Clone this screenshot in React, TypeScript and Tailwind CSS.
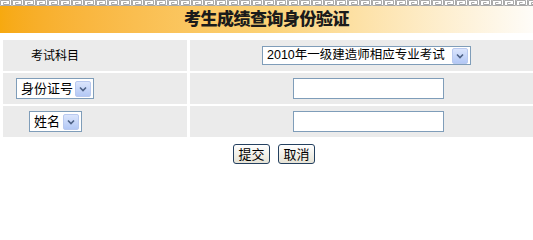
import React from 'react';

const cjk = '"Liberation Sans", "Noto Sans CJK SC", sans-serif';

function KeyStrip() {
  return (
    <svg width="533" height="6" className="block">
      <defs>
        <pattern id="key" width="12" height="6" patternUnits="userSpaceOnUse">
          <path
            d="M0.5 5.5 V0.5 H9.5 V4.5 H3.5 V2.5 H6.5 M11.5 0 V5.5 H0.5"
            fill="none"
            stroke="#a9a9a9"
            strokeWidth="1"
          />
        </pattern>
      </defs>
      <rect width="533" height="6" fill="#ffffff" />
      <rect width="533" height="6" fill="url(#key)" />
    </svg>
  );
}

function Arrow() {
  return (
    <span className="flex h-[16px] w-[16px] shrink-0 items-center justify-center rounded-[2px] border border-[#b9c9ef] bg-gradient-to-b from-[#dbe5fc] to-[#b3c8f5]">
      <svg width="8" height="6" viewBox="0 0 8 6">
        <path d="M1 1.5 L4 4.5 L7 1.5" fill="none" stroke="#4d6185" strokeWidth="1.6" />
      </svg>
    </span>
  );
}

function FakeSelect({ label, className }: { label: string; className: string }) {
  return (
    <div
      className={`flex items-center justify-between border border-[#7f9db9] bg-white pl-[4px] pr-[2px] leading-none text-black ${className}`}
    >
      <span className="whitespace-nowrap">{label}</span>
      <Arrow />
    </div>
  );
}

function TextBox() {
  return <input type="text" className="h-[21px] w-[151px] border border-[#7f9db9] bg-white outline-none" />;
}

function Btn({ label }: { label: string }) {
  return (
    <button className="flex h-[20px] w-[37px] items-center justify-center rounded-[3px] border border-[#24405f] bg-gradient-to-b from-white to-[#e6e3d6] text-[13px] leading-none text-black">
      {label}
    </button>
  );
}

export default function App() {
  return (
    <div className="h-[202px] w-[533px] overflow-hidden bg-white" style={{ fontFamily: cjk }}>
      {/* Header */}
      <KeyStrip />
      <div className="flex h-[27px] items-center justify-center bg-gradient-to-r from-[#f7a90f] via-[#fcd275] to-[#fefcf8]">
        <h1 className="text-[17px] font-black leading-none tracking-[-0.5px] text-[#1b1b1b]">
          考生成绩查询身份验证
        </h1>
      </div>

      {/* Form table */}
      <div className="mt-[7px] grid grid-cols-[184px_343px] gap-x-[3px] gap-y-[2px] pl-[3px]">
        <div className="flex h-[31px] items-center bg-[#ebebeb] pl-[28px] text-[12px] text-black">考试科目</div>
        <div className="flex h-[31px] items-center bg-[#ebebeb] pl-[72px]">
          <FakeSelect label="2010年一级建造师相应专业考试" className="h-[19px] w-[209px] text-[12.5px]" />
        </div>

        <div className="flex h-[31px] items-center bg-[#ebebeb] pl-[13px]">
          <FakeSelect label="身份证号" className="h-[21px] w-[78px] text-[13px]" />
        </div>
        <div className="flex h-[31px] items-center bg-[#ebebeb] pl-[103px]">
          <TextBox />
        </div>

        <div className="flex h-[31px] items-center bg-[#ebebeb] pl-[26px]">
          <FakeSelect label="姓名" className="h-[21px] w-[53px] text-[13px]" />
        </div>
        <div className="flex h-[31px] items-center bg-[#ebebeb] pl-[103px]">
          <TextBox />
        </div>
      </div>

      <div className="mt-[7px] flex gap-[8px] pl-[233px]">
        <Btn label="提交" />
        <Btn label="取消" />
      </div>
    </div>
  );
}
